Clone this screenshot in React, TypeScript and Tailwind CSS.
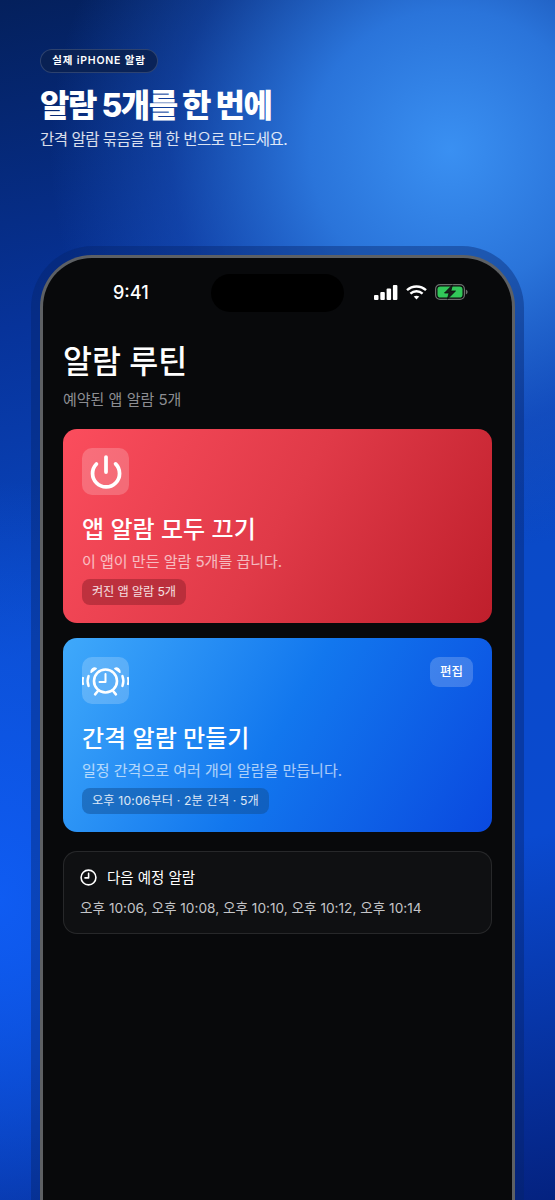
import { Power } from "lucide-react";

const FONT = "font-['Inter','Noto_Sans_CJK_KR',sans-serif]";

function StatusIcons() {
  return (
    <div className="flex items-center gap-[8px]">
      {/* signal */}
      <svg width="24" height="15" viewBox="0 0 24 15" fill="white">
        <rect x="0" y="10" width="4.5" height="5" rx="1" />
        <rect x="6.3" y="7" width="4.5" height="8" rx="1" />
        <rect x="12.6" y="3.5" width="4.5" height="11.5" rx="1" />
        <rect x="18.9" y="0" width="4.5" height="15" rx="1" />
      </svg>
      {/* wifi */}
      <svg width="21" height="15" viewBox="0 0 21 15" fill="none" stroke="white" strokeWidth="2.4">
        <path d="M1 5.2C6.4 .2 14.6 .2 20 5.2" />
        <path d="M4.4 8.6c3.5-3.1 8.7-3.1 12.2 0" />
        <path d="M10.5 14.6 7.7 11.6c1.7-1.3 3.9-1.3 5.6 0z" fill="white" stroke="none" />
      </svg>
      {/* battery charging */}
      <svg width="33" height="16" viewBox="0 0 33 16" fill="none">
        <rect x=".6" y=".6" width="28.8" height="14.8" rx="4.4" stroke="#6b6f6c" strokeWidth="1.2" />
        <rect x="2.5" y="2.5" width="25" height="11" rx="2.8" fill="#32c759" />
        <path d="M30.8 5.5c1.2.4 1.8 1.3 1.8 2.5s-.6 2.1-1.8 2.5z" fill="#6b6f6c" />
        <path d="M17.5 .8 9.5 9h4.6l-1.8 6.2L20.5 7h-4.7z" fill="#1c1d1c" stroke="#0a0b0c" strokeWidth=".8" />
      </svg>
    </div>
  );
}

function AlarmGlyph() {
  return (
    <svg width="47" height="47" viewBox="0 0 47 47" fill="none" stroke="white" strokeLinecap="round">
      <circle cx="23.5" cy="24" r="11.5" strokeWidth="2.6" />
      <path d="M23.5 17V25H17.5" strokeWidth="2" strokeLinejoin="round" />
      <path d="M14 11.5a3.6 3.6 0 0 0-4.8 3.6zM33 11.5a3.6 3.6 0 0 1 4.8 3.6z" fill="white" strokeWidth="1.8" strokeLinejoin="round" />
      <path d="m15.5 34.5-2.4 2.8M31.5 34.5l2.4 2.8" strokeWidth="2.6" />
      <path d="M6.6 19c-1.3 3.2-1.3 6.8 0 10M40.4 19c1.3 3.2 1.3 6.8 0 10" strokeWidth="2.4" />
      <path d="M1 21c-.6 2-.6 4 0 6M46 21c.6 2 .6 4 0 6" strokeWidth="2.2" />
    </svg>
  );
}

function ActionCard({
  title,
  desc,
  chip,
  icon,
  edit,
  className,
  chipClass,
}: {
  title: string;
  desc: string;
  chip: string;
  icon: React.ReactNode;
  edit?: boolean;
  className: string;
  chipClass: string;
}) {
  return (
    <div className={`relative h-[194px] rounded-[14px] pt-[19px] px-[19px] ${className}`}>
      <div className="flex h-[47px] w-[47px] items-center justify-center rounded-[10px] bg-white/20">{icon}</div>
      {edit && (
        <div className="absolute right-[19px] top-[19px] flex h-[30px] w-[43px] items-center justify-center rounded-[9px] bg-white/20 text-[12.5px] font-medium text-white">
          편집
        </div>
      )}
      <div className="mt-[17px] text-[24px] leading-[36px] font-medium text-white">{title}</div>
      <div className="mt-[4px] text-[15px] leading-[20px] text-white/65">{desc}</div>
      <div className="mt-[7px] flex">
        <div className={`flex h-[26px] items-center rounded-[8px] px-[10px] text-[12.2px] text-white/85 ${chipClass}`}>
          {chip}
        </div>
      </div>
    </div>
  );
}

export default function App() {
  return (
    <div
      className={`relative h-[1200px] w-[555px] overflow-hidden bg-[#0a44c4] ${FONT}
        bg-[radial-gradient(ellipse_400px_400px_at_450px_150px,#3a90f2_0%,#2a74da_35%,rgba(30,90,200,0.45)_70%,rgba(20,80,200,0)_100%),radial-gradient(ellipse_300px_420px_at_0px_900px,#0f5cf2_0%,rgba(15,92,242,0)_100%),linear-gradient(168deg,#04205c_0%,#07339a_25%,#0a4ac8_50%,#0a4ad0_72%,#042280_100%)]`}
    >
      <div className="pl-[40px] pt-[49px]">
        <div className="flex h-[24px] w-[118px] items-center justify-center rounded-full border border-white/15 bg-[#0a2152]/90 text-[10.5px] font-semibold tracking-[0.8px] text-white">
          실제 iPHONE 알람
        </div>
        <h1 className="mt-[13px] text-[32px] leading-[40px] font-extrabold tracking-[-1.5px] text-white">알람 5개를 한 번에</h1>
        <p className="mt-[2px] text-[15.5px] leading-[24px] tracking-[-0.5px] text-white/85">간격 알람 묶음을 탭 한 번으로 만드세요.</p>
      </div>

      {/* phone */}
      <div className="ml-[31px] mt-[94px] w-[493px] rounded-t-[62px] bg-[#06246a]/40 px-[9px] pt-[9px]">
        <div className="h-[1000px] rounded-t-[52px] border-[3px] border-b-0 border-[#5d6064] bg-[#08090b] px-[20px]">
          <div className="relative flex h-[68px] items-center justify-between pl-[50px] pr-[24px]">
            <span className="text-[18px] font-medium text-white">9:41</span>
            <div className="absolute left-[148px] top-[16px] h-[38px] w-[133px] rounded-[20px] bg-black" />
            <StatusIcons />
          </div>
          <div className="mt-[14px] text-[31.5px] leading-[44px] font-medium text-white">알람 루틴</div>
          <div className="mt-[5px] text-[15px] leading-[22px] text-[#8d8e92]">예약된 앱 알람 5개</div>

          <div className="mt-[18px] flex flex-col gap-[15px]">
            <ActionCard
              title="앱 알람 모두 끄기"
              desc="이 앱이 만든 알람 5개를 끕니다."
              chip="켜진 앱 알람 5개"
              icon={<Power size={36} color="white" strokeWidth={2.5} />}
              className="bg-[linear-gradient(120deg,#fb4d5d,#e03a48_50%,#bf1f2c)]"
              chipClass="bg-[#9c2430]/60 tracking-[-0.1px]"
            />
            <ActionCard
              title="간격 알람 만들기"
              desc="일정 간격으로 여러 개의 알람을 만듭니다."
              chip="오후 10:06부터 · 2분 간격 · 5개"
              icon={<AlarmGlyph />}
              edit
              className="bg-[linear-gradient(120deg,#3fa9fb,#1277ee_50%,#0a49df)]"
              chipClass="bg-[#0f4d94]/50 tracking-[0.15px]"
            />
          </div>

          <div className="mt-[19px] h-[83px] rounded-[14px] border border-white/10 bg-[#0f1012] px-[16px] pt-[15px]">
            <div className="flex items-center gap-[10px] text-[14.5px] text-white">
              <svg width="17" height="17" viewBox="0 0 17 17" fill="none" stroke="white" strokeWidth="1.6" strokeLinecap="round" strokeLinejoin="round">
                <circle cx="8.5" cy="8.5" r="7.4" />
                <path d="M8.6 4.4v4.5H5" />
              </svg>
              다음 예정 알람
            </div>
            <div className="mt-[9px] text-[13.65px] leading-[20px] text-[#c4c5c8]">오후 10:06, 오후 10:08, 오후 10:10, 오후 10:12, 오후 10:14</div>
          </div>
        </div>
      </div>
    </div>
  );
}
